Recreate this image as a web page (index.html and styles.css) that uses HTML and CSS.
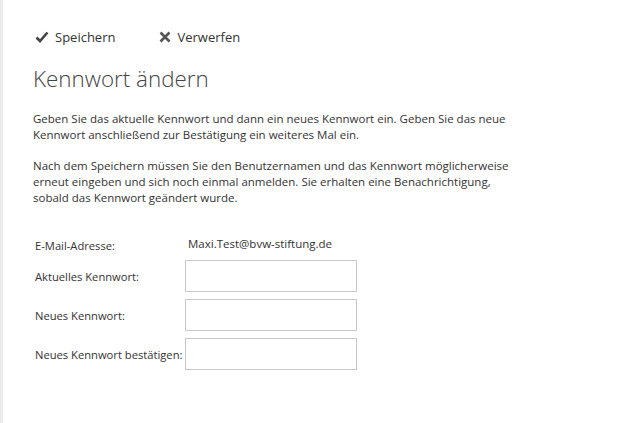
FILE: index.html
```html
<!DOCTYPE html>
<html lang="de">
<head>
    <meta charset="UTF-8">
    <title>Kennwort ändern</title>
    <link rel="stylesheet" href="styles.css">
</head>
<body>
    <div class="page">
        <div class="toolbar">
            <span class="action">
                <svg width="14" height="12" viewBox="0 0 14 12"><path d="M1.5 6.5 L5 10 L12.5 1.5" fill="none" stroke="#444" stroke-width="2.6"/></svg>
                Speichern
            </span>
            <span class="action">
                <svg width="12" height="12" viewBox="0 0 12 12"><path d="M1.5 1.5 L10.5 10.5 M10.5 1.5 L1.5 10.5" fill="none" stroke="#555" stroke-width="2.6"/></svg>
                Verwerfen
            </span>
        </div>

        <h1>Kennwort ändern</h1>

        <p>Geben Sie das aktuelle Kennwort und dann ein neues Kennwort ein. Geben Sie das neue Kennwort anschließend zur Bestätigung ein weiteres Mal ein.</p>
        <p>Nach dem Speichern müssen Sie den Benutzernamen und das Kennwort möglicherweise erneut eingeben und sich noch einmal anmelden. Sie erhalten eine Benachrichtigung, sobald das Kennwort geändert wurde.</p>

        <div class="form">
            <label>E-Mail-Adresse:</label>
            <span class="email">Maxi.Test@bvw-stiftung.de</span>
            <label>Aktuelles Kennwort:</label>
            <input type="password">
            <label>Neues Kennwort:</label>
            <input type="password">
            <label>Neues Kennwort bestätigen:</label>
            <input type="password">
        </div>
    </div>
</body>
</html>
```

FILE: styles.css
```css
html, body {
    margin: 0;
    height: 100%;
}
body {
    font-family: "Open Sans", "Noto Sans", sans-serif;
    color: #333;
    background: #fff;
    border-left: 3px solid #ececec;
    box-sizing: border-box;
}
.page {
    padding: 26px 0 0 30px;
}
.toolbar {
    display: flex;
    gap: 44px;
    font-size: 13px;
    color: #333;
    height: 22px;
    align-items: center;
    padding-left: 2px;
}
.action {
    display: flex;
    align-items: center;
    gap: 6px;
}
h1 {
    font-weight: 300;
    font-size: 22.4px;
    color: #444;
    margin: 15px 0 0 0;
    line-height: 32px;
}
p {
    font-size: 11.5px;
    line-height: 16px;
    width: 482px;
    margin: 16px 0 0 0;
}
p + p {
    margin-top: 15px;
}
.form {
    display: grid;
    grid-template-columns: 150px 172px;
    row-gap: 7px;
    align-items: center;
    font-size: 11.5px;
    margin-top: 32px;
    padding-left: 2px;
}
.form label {
    white-space: nowrap;
    font-size: 11.2px;
}
.email {
    padding-left: 3px;
    position: relative;
    top: -2px;
}
input {
    height: 32px;
    box-sizing: border-box;
    border: 1px solid #c8c8c8;
    margin: 0;
    padding: 0 6px;
}
```
